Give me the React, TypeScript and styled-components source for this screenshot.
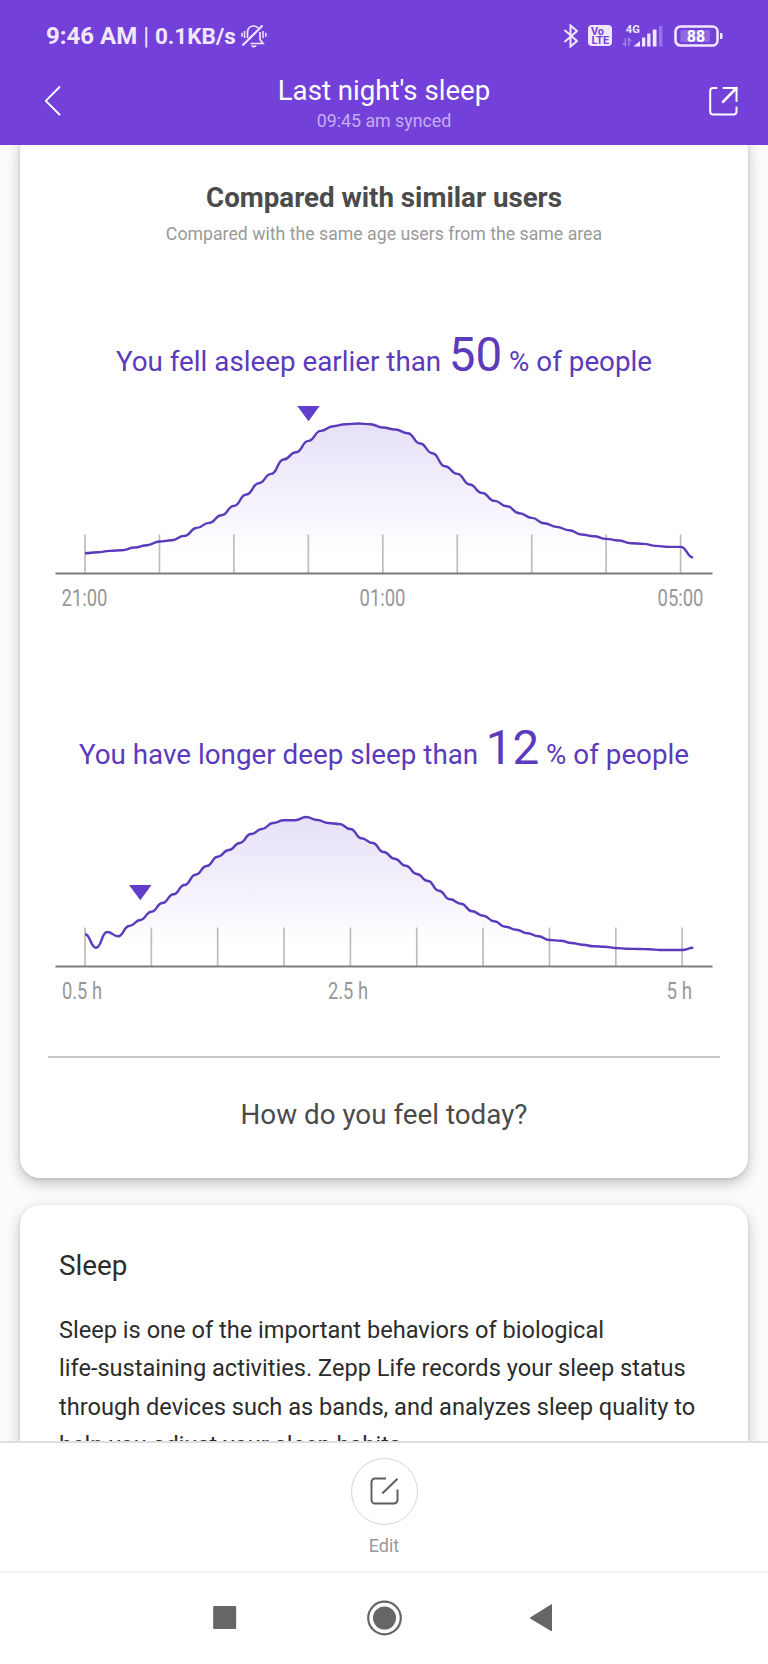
import React from "react";
import styled, { createGlobalStyle } from "styled-components";

const GlobalStyle = createGlobalStyle`
  * { box-sizing: border-box; }
  html, body { margin: 0; padding: 0; background: #fff; }
  body { font-family: Roboto, "Liberation Sans", sans-serif; }
`;

const purple = "#7341d9";
const ink = "#5b3abb";
const lilac = "#f2e6ff";

const Screen = styled.div`
  width: 768px;
  height: 1664px;
  display: flex;
  flex-direction: column;
  overflow: hidden;
  background: #fff;
`;

const Header = styled.header`
  height: 145px;
  flex: none;
  background: ${purple};
  color: #fff;
`;

const StatusBar = styled.div`
  height: 71px;
  display: flex;
  align-items: center;
  justify-content: space-between;
  padding: 0 45px 0 46px;
  color: ${lilac};
`;

const StatusGroup = styled.div<{ $gap: number }>`
  display: flex;
  align-items: center;
  gap: ${(p) => p.$gap}px;
`;

const Clock = styled.span`
  font-size: 24px;
  line-height: 28px;
  font-weight: 700;
  white-space: pre;
`;

const Thin = styled.span`
  font-weight: 400;
`;

const Speed = styled.span`
  font-size: 22.5px;
`;

const AppBar = styled.div`
  height: 74px;
  display: grid;
  grid-template-columns: 100px 1fr 100px;
`;

const BarButton = styled.button<{ $end?: boolean }>`
  height: 60px;
  border: 0;
  background: none;
  display: flex;
  align-items: center;
  justify-content: ${(p) => (p.$end ? "flex-end" : "flex-start")};
  padding: 0 ${(p) => (p.$end ? "30px 0 0" : "0 0 44px")};
`;

const TitleBlock = styled.div`
  padding-top: 3px;
  text-align: center;
`;

const Title = styled.h1`
  margin: 0;
  font-size: 27.65px;
  line-height: 33px;
  font-weight: 400;
`;

const Synced = styled.div`
  margin-top: 3px;
  font-size: 17.8px;
  line-height: 22px;
  color: #c5adf2;
`;

const Content = styled.main`
  flex: 1;
  min-height: 0;
  overflow: hidden;
  background: #fbfbfb;
  padding: 0 20px;
`;

const Card = styled.section<{ $height: number }>`
  height: ${(p) => p.$height}px;
  background: #fff;
  border-radius: 20px;
  box-shadow: 0 5px 14px rgba(0, 0, 0, 0.24), 0 1px 3px rgba(0, 0, 0, 0.1);
`;

const CompareCard = styled(Card)`
  margin-top: -15px;
  padding-top: 51px;
`;

const InfoCard = styled(Card)`
  margin-top: 27px;
  padding: 44px 39px 0;
`;

const Heading = styled.h2`
  margin: 0;
  text-align: center;
  font-size: 27.7px;
  line-height: 34px;
  font-weight: 700;
  color: #4b4b4b;
`;

const Caption = styled.p`
  margin: 7px 0 81px;
  text-align: center;
  font-size: 17.72px;
  line-height: 24px;
  color: #999;
`;

const Comparison = styled.div`
  & + & {
    margin-top: 100px;
  }
`;

const Statement = styled.div`
  height: 55.5px;
  display: flex;
  justify-content: center;
  align-items: baseline;
  font-size: 27.8px;
  color: ${ink};
  white-space: nowrap;

  ${Comparison} + ${Comparison} & {
    height: 56px;
  }
`;

const Figure = styled.strong`
  margin: 0 7px 0 7.5px;
  font-size: 47.5px;
  line-height: 57px;
  font-weight: 400;
`;

const Plot = styled.svg`
  display: block;
`;

const Divider = styled.hr`
  width: 672px;
  height: 2px;
  margin: 42.5px auto 40px;
  border: 0;
  background: #c9c9c9;
`;

const Question = styled.p`
  margin: 0;
  text-align: center;
  font-size: 27.8px;
  line-height: 34px;
  color: #4b4b4b;
`;

const InfoTitle = styled.h3`
  margin: 0 0 28px;
  font-size: 27.8px;
  line-height: 34px;
  font-weight: 400;
  color: #2c2c2c;
`;

const InfoText = styled.p`
  margin: 0;
  font-size: 23.6px;
  line-height: 38.4px;
  color: #2c2c2c;
  white-space: nowrap;
`;

const EditBar = styled.footer`
  height: 130px;
  flex: none;
  border-top: 2px solid #dedede;
  display: flex;
  flex-direction: column;
  align-items: center;
  padding-top: 14.5px;
`;

const EditButton = styled.button`
  width: 67px;
  height: 67px;
  padding: 0;
  border: 1.5px solid #d6d6d6;
  border-radius: 50%;
  background: #fff;
  display: flex;
  align-items: center;
  justify-content: center;
`;

const EditLabel = styled.span`
  margin-top: 9px;
  font-size: 18px;
  line-height: 24px;
  color: #999;
`;

const NavBar = styled.nav`
  height: 93px;
  flex: none;
  border-top: 2px solid #f1f1f1;
  display: flex;
  justify-content: center;
`;

const NavInner = styled.div`
  width: 342px;
  margin-top: 25px;
`;

type ChartProps = {
  id: string;
  values: number[];
  step: number;
  ticks: number;
  tickStep: number;
  marker: { x: number; y: number };
  labels: { text: string; x: number; width: number }[];
};

const ORIGIN = 65;
const BASE = 190.5;

function smooth(values: number[], step: number) {
  return values
    .map((y, i) => {
      const x = ORIGIN + i * step;
      if (i === 0) return `M${x} ${y.toFixed(1)}`;
      const mid = (x - step / 2).toFixed(1);
      return `C${mid} ${values[i - 1].toFixed(1)} ${mid} ${y.toFixed(1)} ${x.toFixed(1)} ${y.toFixed(1)}`;
    })
    .join("");
}

function Chart({ id, values, step, ticks, tickStep, marker, labels }: ChartProps) {
  const line = smooth(values, step);
  const endX = ORIGIN + (values.length - 1) * step;
  return (
    <Plot width="728" height="237.5" viewBox="0 0 728 237.5">
      <defs>
        <linearGradient id={id} gradientUnits="userSpaceOnUse" x1="0" y1="40" x2="0" y2="172">
          <stop offset="0" stopColor="#e6e0f7" />
          <stop offset="1" stopColor="#ffffff" />
        </linearGradient>
      </defs>
      <path d={`${line}L${endX} 172L${ORIGIN} 172Z`} fill={`url(#${id})`} />
      {Array.from({ length: ticks }, (_, i) => (
        <line key={i} x1={ORIGIN + i * tickStep} x2={ORIGIN + i * tickStep} y1="151.5" y2={BASE} stroke="#bdbdbd" strokeWidth="1.7" />
      ))}
      <line x1="35.5" x2="692.5" y1={BASE} y2={BASE} stroke="#7d7d7d" strokeWidth="1.8" />
      <path d={line} fill="none" stroke={ink} strokeWidth="2.4" strokeLinejoin="round" />
      <path d={`M${marker.x - 11.2} ${marker.y}h22.4l-11.2 15.2z`} fill="#623dcc" />
      {labels.map((l) => (
        <text key={l.text} x={l.x} y="223" textLength={l.width} lengthAdjust="spacingAndGlyphs" fontSize="24.5" fill="#979797">
          {l.text}
        </text>
      ))}
    </Plot>
  );
}

const bedtimes = [
  489, 486, 482, 480, 472, 465, 454, 450, 437, 413, 398, 375, 347, 313, 279, 251, 208, 186, 152, 122, 108, 102, 100, 102, 112,
  118, 129, 160, 189, 228, 251, 283, 308, 332, 348, 369, 383, 399, 410, 420, 433, 438, 446, 451, 459, 461, 467, 470, 470, 502,
].map((v) => v / 3 + 7.2);

const deepSleep = [
  703, 743, 696, 709, 678, 660, 635, 609, 583, 555, 524, 498, 470, 450, 429, 402, 387, 369, 361, 361, 351, 360, 369, 372, 387,
  415, 429, 456, 476, 497, 522, 543, 572, 598, 611, 634, 647, 664, 680, 689, 700, 709, 720, 722, 729, 734, 739, 740, 744, 746,
  747, 748, 750, 750, 750, 743,
].map((v) => v / 3 - 76);

const BellOff = () => (
  <svg width="26" height="24" viewBox="0 0 26 24" fill="none" stroke={lilac} strokeWidth="1.7">
    <path d="M6.5 14V8.5C6.5 4.5 9 2 12.5 2c2 0 3.6.7 4.7 2M19 8v7.5l3 4H9.5" />
    <path d="M1.5 21.5 21.5 1.5" strokeWidth="2" />
    <path d="M3.5 7v7M1 8.8v4M22 7v7M24.8 8.8v4" strokeWidth="1.5" />
    <path d="M9.8 21.5h6c-.5 1.3-1.6 2-3 2s-2.5-.7-3-2z" fill={lilac} stroke="none" />
  </svg>
);

const Bluetooth = () => (
  <svg width="16" height="24" viewBox="0 0 16 24" fill="none" stroke={lilac} strokeWidth="2">
    <path d="M2.5 6 15 17l-6.5 5.5v-21L15 7 2.5 18" />
  </svg>
);

const VoLte = () => (
  <svg width="24" height="21" viewBox="0 0 24 21">
    <rect width="24" height="21" rx="4" fill={lilac} />
    <text x="3" y="10" fontSize="10" fontWeight="700" fill={purple} textLength="13" lengthAdjust="spacingAndGlyphs">Vo</text>
    <text x="3.5" y="19" fontSize="10" fontWeight="700" fill={purple} textLength="17.5" lengthAdjust="spacingAndGlyphs">LTE</text>
  </svg>
);

const Signal = () => (
  <svg width="42" height="23" viewBox="0 0 42 23">
    <text x="3.8" y="8.6" fontSize="11" fontWeight="700" fill={lilac} textLength="14" lengthAdjust="spacingAndGlyphs">4G</text>
    <g stroke="#a783e9" strokeWidth="1.4" fill="none">
      <path d="M3.4 14v7.5L.8 19M6.8 22v-7.5L9.2 17" />
    </g>
    <path d="M11.5 22.5 18 17v5.5z" fill={lilac} />
    <path d="M20 13.5h3.3v9H20zM25.2 9.5h3.3v13h-3.3zM30.8 5.5h3.7v17h-3.7z" fill={lilac} />
    <path d="M37 2h3.4v20.5H37z" fill="#9a74e6" />
  </svg>
);

const Battery = () => (
  <svg width="49" height="22" viewBox="0 0 49 22">
    <rect x="1.5" y="1.5" width="42" height="19" rx="5" fill="none" stroke={lilac} strokeWidth="2.6" />
    <rect x="6.5" y="5" width="29.5" height="12" rx="1.5" fill="#9068e2" />
    <path d="M46 8h1.2c.8 0 1.300.5 1.300 1.300v3.400c0 .8-.5 1.300-1.300 1.300H46z" fill={lilac} />
    <text x="22" y="17" textAnchor="middle" fontSize="16" fontWeight="700" fill="#fff">88</text>
  </svg>
);

const Back = () => (
  <svg width="18" height="32" viewBox="0 0 18 32" fill="none" stroke="#fff" strokeWidth="1.9" strokeLinecap="round" strokeLinejoin="round">
    <path d="M15.5 2 1.8 15.8 15.5 29.5" />
  </svg>
);

const Share = () => (
  <svg width="30" height="30" viewBox="0 0 30 30" fill="none" stroke="#fff" strokeWidth="2" strokeLinecap="round" strokeLinejoin="round">
    <path d="M8.5 2H5.2a3 3 0 0 0-3 3v20.5a3 3 0 0 0 3 3H25.5a3 3 0 0 0 3-3v-4" />
    <path d="M15.5 2h13v13" />
    <path d="M28.5 2 15 15.8" strokeWidth="2.6" />
  </svg>
);

const Edit = () => (
  <svg width="29" height="29" viewBox="0 0 29 29" fill="none" stroke="#5c5c5c" strokeWidth="1.9">
    <path d="M16 1.5H5A3.5 3.5 0 0 0 1.5 5v18A3.5 3.5 0 0 0 5 26.5h19a3.5 3.5 0 0 0 3.5-3.5V12.5" />
    <path d="M12.3 16.5 27.5 1.7" />
  </svg>
);

const NavIcons = () => (
  <svg width="342" height="40" viewBox="0 0 342 40">
    <g fill="#666">
      <rect x="0.2" y="8" width="23" height="23" rx="1" />
      <circle cx="171.5" cy="20" r="11.5" />
      <circle cx="171.5" cy="20" r="16.3" fill="none" stroke="#666" strokeWidth="2.2" />
      <path d="M339 7v25.5q0 1-1 .4L317.5 20.7q-1-.7 0-1.4L338 6.500q1-.5 1 .5z" />
    </g>
  </svg>
);

export default function App() {
  return (
    <>
      <GlobalStyle />
      <Screen>
        <Header>
          <StatusBar>
            <StatusGroup $gap={5.5}>
              <Clock>
                9:46 AM<Thin> | </Thin>
                <Speed>0.1KB/s</Speed>
              </Clock>
              <BellOff />
            </StatusGroup>
            <StatusGroup $gap={10}>
              <Bluetooth />
              <VoLte />
              <Signal />
              <Battery />
            </StatusGroup>
          </StatusBar>
          <AppBar>
            <BarButton aria-label="Back"><Back /></BarButton>
            <TitleBlock>
              <Title>Last night's sleep</Title>
              <Synced>09:45 am synced</Synced>
            </TitleBlock>
            <BarButton aria-label="Share" $end><Share /></BarButton>
          </AppBar>
        </Header>
        <Content>
          <CompareCard $height={1048}>
            <Heading>Compared with similar users</Heading>
            <Caption>Compared with the same age users from the same area</Caption>
            <Comparison>
              <Statement>
                <span>You fell asleep earlier than</span>
                <Figure>50</Figure>
                <span>% of people</span>
              </Statement>
              <Chart
                id="bedtime"
                values={bedtimes}
                step={12.41}
                ticks={9}
                tickStep={74.45}
                marker={{ x: 288.5, y: 23 }}
                labels={[
                  { text: "21:00", x: 41.5, width: 46 },
                  { text: "01:00", x: 339.5, width: 46 },
                  { text: "05:00", x: 637.5, width: 46 },
                ]}
              />
            </Comparison>
            <Comparison>
              <Statement>
                <span>You have longer deep sleep than</span>
                <Figure>12</Figure>
                <span>% of people</span>
              </Statement>
              <Chart
                id="deep"
                values={deepSleep}
                step={11.06}
                ticks={10}
                tickStep={66.35}
                marker={{ x: 120.3, y: 109 }}
                labels={[
                  { text: "0.5 h", x: 42, width: 40 },
                  { text: "2.5 h", x: 308, width: 40 },
                  { text: "5 h", x: 646.5, width: 25.5 },
                ]}
              />
            </Comparison>
            <Divider />
            <Question>How do you feel today?</Question>
          </CompareCard>
          <InfoCard $height={400}>
            <InfoTitle>Sleep</InfoTitle>
            <InfoText>
              Sleep is one of the important behaviors of biological
              <br />
              life-sustaining activities. Zepp Life records your sleep status
              <br />
              through devices such as bands, and analyzes sleep quality to
              <br />
              help you adjust your sleep habits.
            </InfoText>
          </InfoCard>
        </Content>
        <EditBar>
          <EditButton aria-label="Edit"><Edit /></EditButton>
          <EditLabel>Edit</EditLabel>
        </EditBar>
        <NavBar>
          <NavInner>
            <NavIcons />
          </NavInner>
        </NavBar>
      </Screen>
    </>
  );
}
